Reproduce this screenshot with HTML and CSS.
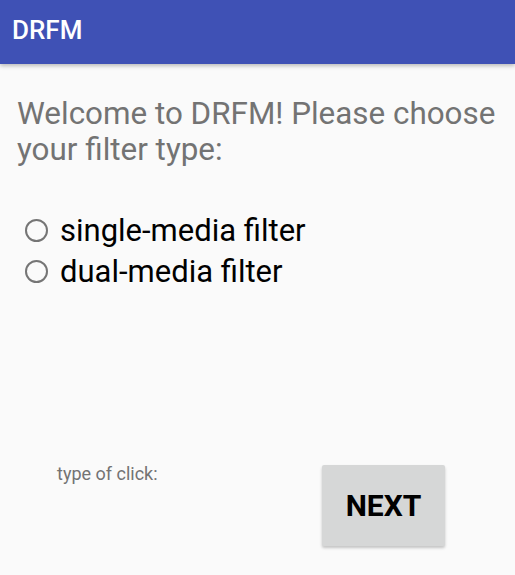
FILE: index.html
```html
<!DOCTYPE html>
<html lang="en">
<head>
<meta charset="utf-8">
<title>DRFM</title>
<link rel="stylesheet" href="styles.css">
</head>
<body>
<header class="appbar"><span class="title">DRFM</span></header>
<main class="content">
  <p class="welcome">Welcome to DRFM! Please choose your filter type:</p>
  <div class="radio-group">
    <label class="radio-row"><span class="radio"></span><span class="radio-text">single-media filter</span></label>
    <label class="radio-row"><span class="radio"></span><span class="radio-text">dual-media filter</span></label>
  </div>
  <div class="bottom-row">
    <span class="click-label">type of click:</span>
    <button class="next-btn" type="button">NEXT</button>
  </div>
</main>
</body>
</html>
```
FILE: styles.css
```css
html, body {
  margin: 0;
  padding: 0;
}
body {
  width: 515px;
  height: 575px;
  background: #fafafa;
  font-family: Roboto, "Liberation Sans", sans-serif;
  overflow: hidden;
}
.appbar {
  box-sizing: border-box;
  height: 64px;
  background: #3f51b5;
  padding: 15px 0 0 12px;
  box-shadow: 0 2px 4px rgba(0, 0, 0, 0.25);
  position: relative;
}
.title {
  display: block;
  color: #ffffff;
  font-size: 26px;
  line-height: 30px;
  font-weight: 500;
}
.content {
  padding: 0;
}
.welcome {
  margin: 32px 10px 0 17px;
  font-size: 31.4px;
  line-height: 36px;
  color: #737373;
}
.radio-group {
  margin-top: 42px;
  padding-left: 25px;
  display: flex;
  flex-direction: column;
}
.radio-row {
  height: 41px;
  display: flex;
  align-items: center;
  gap: 12px;
}
.radio {
  box-sizing: border-box;
  width: 23px;
  height: 23px;
  border: 2px solid #757575;
  border-radius: 50%;
  flex: none;
}
.radio-text {
  font-size: 31px;
  line-height: 41px;
  color: #000000;
}
.bottom-row {
  margin-top: 171px;
  padding-left: 57px;
  display: flex;
  align-items: flex-start;
}
.click-label {
  font-size: 18px;
  line-height: 21px;
  color: #737373;
}
.next-btn {
  margin: 2px 70px 0 auto;
  width: 123px;
  height: 81px;
  border: none;
  border-radius: 2px;
  background: #d6d7d7;
  box-shadow: 0 2px 3px rgba(0, 0, 0, 0.22);
  font-family: Roboto, "Liberation Sans", sans-serif;
  font-size: 30px;
  font-weight: 700;
  color: #000000;
  padding: 0;
}
```
